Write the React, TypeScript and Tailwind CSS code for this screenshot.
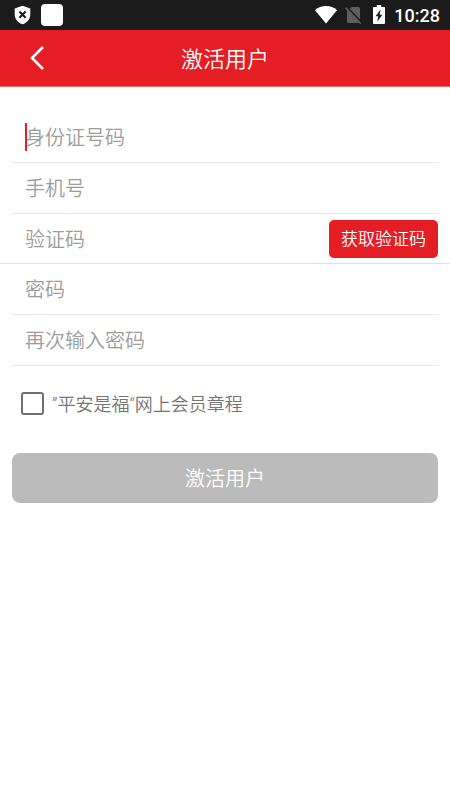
import { useState } from "react";

const FIELDS = [
  { id: "idCard", label: "身份证号码", type: "text" },
  { id: "phone", label: "手机号", type: "tel" },
  { id: "code", label: "验证码", type: "text" },
  { id: "password", label: "密码", type: "password" },
  { id: "confirm", label: "再次输入密码", type: "password" },
];

function StatusBar() {
  return (
    <div className="flex h-[30px] items-center bg-[#1b1b1b] pl-[14px] pr-[10px] text-white">
      {/* Notifications */}
      <svg className="h-5 w-[17px]" viewBox="0 0 17 20" fill="none">
        <path d="M8.5 0.8 16.3 3.5V9.5C16.3 14 13 17.8 8.5 19.3 4 17.8 0.7 14 0.7 9.5V3.5Z" fill="#fff" />
        <path d="M5.4 6.5l6.2 6.2M11.6 6.5l-6.2 6.2" stroke="#1b1b1b" strokeWidth="2" />
      </svg>
      <span className="ml-[10px] h-[22px] w-[22px] rounded bg-white" />

      {/* System icons */}
      <svg className="ml-auto h-[18px] w-[22px]" viewBox="0 0 22 18">
        <path d="M0 4.2C3 1.4 6.8 0 11 0s8 1.4 11 4.2L11 17.4Z" fill="#fff" />
      </svg>
      <svg className="ml-2 h-[18px] w-[17px]" viewBox="0 0 17 18">
        <path d="M6.5 1H13.5Q15 1 15 2.5V17H3.5Q2 17 2 15.5V5.5Z" fill="#5d5d5d" />
        <path d="M1.8 0.8 16.6 16.6" stroke="#1b1b1b" strokeWidth="1.8" />
        <path d="M0.6 1.6 15.8 17.8" stroke="#5d5d5d" strokeWidth="1.6" />
      </svg>
      <svg className="ml-[11px] h-5 w-3" viewBox="0 0 12 20">
        <path d="M3.8 0H8.2V2H11.2Q12 2 12 2.8V18.2Q12 19 11.2 19H0.8Q0 19 0 18.2V2.8Q0 2 0.8 2H3.8Z" fill="#fff" />
        <path d="M7.6 4.6 2.6 11.2H5.3L4.2 16.8 9.4 9.8H6.7Z" fill="#1b1b1b" />
      </svg>
      <span className="ml-[9px] pt-0.5 font-[Roboto] text-lg font-medium leading-none">10:28</span>
    </div>
  );
}

export default function App() {
  const [values, setValues] = useState<Record<string, string>>({});
  const [agreed, setAgreed] = useState(false);

  return (
    <div className="min-h-screen bg-white font-['Roboto','Noto_Sans_CJK_SC',sans-serif] font-[350]">
      <StatusBar />

      <header className="grid h-[57px] grid-cols-[64px_1fr_64px] items-center border-b border-[#f0666a] bg-[#e51d24] text-white">
        <button type="button" aria-label="返回" className="flex h-full items-center pl-[30px]">
          <svg className="h-6 w-[14px]" viewBox="0 0 14 24" fill="none" stroke="#fff" strokeWidth="2.6">
            <path d="M13 1 2 12l11 11" />
          </svg>
        </button>
        <h1 className="pt-1 text-center text-[22px] leading-8">激活用户</h1>
      </header>

      <form className="pt-[25px]" onSubmit={(e) => e.preventDefault()}>
        {FIELDS.map(({ id, label, type }, i) => (
          <div key={id} className={id === "code" ? "border-b border-[#dfdfdf] px-3" : "px-3"}>
            <div
              className={
                id === "code"
                  ? "relative flex h-[49px] items-center pl-[13px]"
                  : "relative flex h-[51px] items-center border-b border-[#e8e8e8] pl-[13px]"
              }
            >
              {i === 0 && !values[id] && (
                <span className="absolute left-[13px] h-7 w-[2px] bg-[#e51d24]" />
              )}
              <input
                id={id}
                type={type}
                aria-label={label}
                placeholder={label}
                value={values[id] ?? ""}
                onChange={(e) => setValues({ ...values, [id]: e.target.value })}
                className="h-8 min-w-0 flex-1 bg-transparent pt-0.5 text-xl text-[#333] caret-[#e51d24] outline-none placeholder:text-[#9c9c9c]"
              />
              {id === "code" && (
                <button type="button" className="h-[38px] w-[109px] rounded-[5px] bg-[#e51d24] text-[17px] leading-6 text-white">
                  获取验证码
                </button>
              )}
            </div>
          </div>
        ))}

        <label className="mt-[23px] flex h-7 items-center gap-2 px-[21px] text-lg leading-7 text-[#757575]">
          <input
            type="checkbox"
            checked={agreed}
            onChange={(e) => setAgreed(e.target.checked)}
            className="h-[23px] w-[23px] appearance-none rounded-[3px] border-2 border-[#707070] checked:bg-[#e51d24]"
          />
          <span className="pt-1">”平安是福“网上会员章程</span>
        </label>

        <div className="mt-9 px-3">
          <button type="submit" className="h-[50px] w-full rounded-lg bg-[#bbbbbb] pt-0.5 text-xl leading-8 text-white">
            激活用户
          </button>
        </div>
      </form>
    </div>
  );
}
